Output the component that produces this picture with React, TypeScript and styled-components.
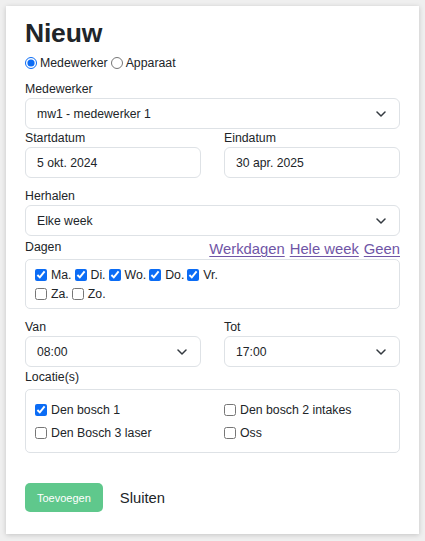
import React from "react";
import styled, { createGlobalStyle } from "styled-components";

const Global = createGlobalStyle`
  html, body { margin: 0; padding: 0; background: #efefef; }
  body { font-family: "Liberation Sans", Arial, sans-serif; color: #212529; }
  * { box-sizing: border-box; }
`;

const Card = styled.div`
  margin: 6px;
  width: 413px;
  height: 528px;
  background: #fff;
  box-shadow: 0 1px 5px rgba(0, 0, 0, 0.18);
  padding: 11px 19px 22px;
  display: flex;
  flex-direction: column;
`;

const Title = styled.h1`
  margin: 0;
  font-size: 26.5px;
  line-height: 32px;
  font-weight: 700;
  letter-spacing: -0.2px;
  color: #212529;
`;

const RadioRow = styled.div`
  display: flex;
  align-items: center;
  height: 16px;
  margin-top: 6px;
  font-size: 12.3px;
`;

const RadioLabel = styled.label`
  display: inline-flex;
  align-items: center;
  margin-right: 3px;
`;

const Radio = styled.input`
  width: 12px;
  height: 12px;
  margin: 0 3px 0 0;
  accent-color: #0b6cf5;
`;

const Field = styled.div<{ $mt?: number }>`
  display: flex;
  flex-direction: column;
  margin-top: ${(p) => p.$mt ?? 0}px;
`;

const Label = styled.div<{ $mb?: number }>`
  font-size: 12.3px;
  line-height: 16px;
  margin-bottom: ${(p) => p.$mb ?? 1}px;
`;

const TwoCol = styled.div<{ $mt?: number }>`
  display: grid;
  grid-template-columns: 1fr 1fr;
  column-gap: 23px;
  margin-top: ${(p) => p.$mt ?? 0}px;
`;

const controlBase = `
  width: 100%;
  height: 31px;
  border: 1px solid #dee2e6;
  border-radius: 6px;
  background: #fff;
  color: #212529;
  font-family: "Liberation Sans", Arial, sans-serif;
  font-size: 12.2px;
  padding: 0 11px;
  outline: none;
`;

const TextInput = styled.input`
  ${controlBase}
`;

const SelectWrap = styled.div`
  position: relative;
  width: 100%;
`;

const NativeSelect = styled.select`
  ${controlBase}
  appearance: none;
  -webkit-appearance: none;
  padding-right: 32px;
`;

const Chevron = styled.svg`
  position: absolute;
  right: 14px;
  top: 50%;
  width: 10px;
  height: 6px;
  margin-top: -3px;
  pointer-events: none;
`;

const LabelRow = styled.div`
  display: flex;
  justify-content: space-between;
  align-items: flex-start;
  margin-top: 3px;
  margin-bottom: 0;
`;

const Links = styled.div`
  display: flex;
  gap: 5px;
  font-size: 14.8px;
  line-height: 20px;
`;

const Link = styled.a`
  color: #6f55a6;
  text-decoration: underline;
  text-underline-offset: 2px;
  text-decoration-thickness: 1px;
`;

const Box = styled.div<{ $p: string }>`
  border: 1px solid #dee2e6;
  border-radius: 5px;
  padding: ${(p) => p.$p};
`;

const DayRow = styled.div`
  display: flex;
  align-items: center;
  height: 19px;
  font-size: 12.3px;
`;

const CheckLabel = styled.label`
  display: inline-flex;
  align-items: center;
  margin-right: 3px;
  white-space: nowrap;
`;

const Check = styled.input`
  width: 12px;
  height: 12px;
  margin: 0 4px 0 0;
  accent-color: #0b6cf5;
`;

const LocGrid = styled.div`
  display: grid;
  grid-template-columns: 1fr 1fr;
  column-gap: 23px;
  row-gap: 4px;
  font-size: 12.3px;
`;

const LocItem = styled.label`
  display: flex;
  align-items: center;
  height: 19px;
`;

const Actions = styled.div`
  display: flex;
  align-items: center;
  margin-top: 30px;
  gap: 17px;
`;

const PrimaryButton = styled.button`
  height: 29px;
  padding: 0 12px;
  border: none;
  border-radius: 5px;
  background: #5fc88c;
  color: #fff;
  font-family: "Liberation Sans", Arial, sans-serif;
  font-size: 11px;
  font-weight: 400;
`;

const TextButton = styled.button`
  border: none;
  background: none;
  padding: 0;
  color: #212529;
  font-family: "Liberation Sans", Arial, sans-serif;
  font-size: 14.8px;
`;

function Select({ value }: { value: string }) {
  return (
    <SelectWrap>
      <NativeSelect value={value} onChange={() => {}}>
        <option>{value}</option>
      </NativeSelect>
      <Chevron viewBox="0 0 10 6" fill="none">
        <path d="M1 1l4 4 4-4" stroke="#343a40" strokeWidth="1.5" strokeLinecap="round" strokeLinejoin="round" />
      </Chevron>
    </SelectWrap>
  );
}

const days = [
  ["Ma.", true],
  ["Di.", true],
  ["Wo.", true],
  ["Do.", true],
  ["Vr.", true],
] as const;

const weekend = ["Za.", "Zo."];

const locations = [
  ["Den bosch 1", true],
  ["Den bosch 2 intakes", false],
  ["Den Bosch 3 laser", false],
  ["Oss", false],
] as const;

export default function App() {
  return (
    <>
      <Global />
      <Card>
        <Title>Nieuw</Title>
        <RadioRow>
          <RadioLabel>
            <Radio type="radio" name="kind" defaultChecked />
            Medewerker
          </RadioLabel>
          <RadioLabel>
            <Radio type="radio" name="kind" />
            Apparaat
          </RadioLabel>
        </RadioRow>

        <Field $mt={10}>
          <Label>Medewerker</Label>
          <Select value="mw1 - medewerker 1" />
        </Field>

        <TwoCol $mt={1}>
          <Field>
            <Label>Startdatum</Label>
            <TextInput type="text" defaultValue="5 okt. 2024" readOnly />
          </Field>
          <Field>
            <Label>Eindatum</Label>
            <TextInput type="text" defaultValue="30 apr. 2025" readOnly />
          </Field>
        </TwoCol>

        <Field $mt={10}>
          <Label>Herhalen</Label>
          <Select value="Elke week" />
        </Field>

        <LabelRow>
          <Label $mb={0}>Dagen</Label>
          <Links>
            <Link href="#">Werkdagen</Link>
            <Link href="#">Hele week</Link>
            <Link href="#">Geen</Link>
          </Links>
        </LabelRow>
        <Box $p="5px 9px">
          <DayRow>
            {days.map(([d, c]) => (
              <CheckLabel key={d}>
                <Check type="checkbox" defaultChecked={c} />
                {d}
              </CheckLabel>
            ))}
          </DayRow>
          <DayRow>
            {weekend.map((d) => (
              <CheckLabel key={d}>
                <Check type="checkbox" />
                {d}
              </CheckLabel>
            ))}
          </DayRow>
        </Box>

        <TwoCol $mt={10}>
          <Field>
            <Label>Van</Label>
            <Select value="08:00" />
          </Field>
          <Field>
            <Label>Tot</Label>
            <Select value="17:00" />
          </Field>
        </TwoCol>

        <Field $mt={2}>
          <Label $mb={4}>Locatie(s)</Label>
          <Box $p="10px 9px">
            <LocGrid>
              {locations.map(([l, c]) => (
                <LocItem key={l}>
                  <Check type="checkbox" defaultChecked={c} />
                  {l}
                </LocItem>
              ))}
            </LocGrid>
          </Box>
        </Field>

        <Actions>
          <PrimaryButton>Toevoegen</PrimaryButton>
          <TextButton>Sluiten</TextButton>
        </Actions>
      </Card>
    </>
  );
}
